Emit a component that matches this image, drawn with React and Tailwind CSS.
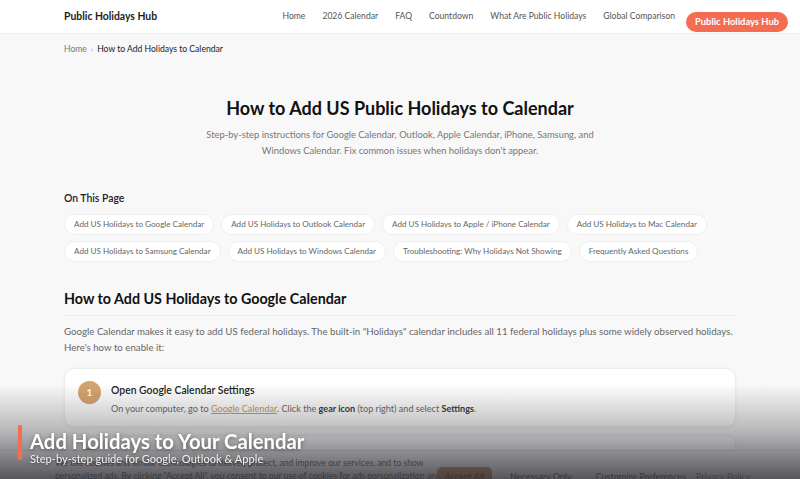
import React from 'react';

const NAV = ['Home', '2026 Calendar', 'FAQ', 'Countdown', 'What Are Public Holidays', 'Global Comparison'];

const TOC = [
  ['Add US Holidays to Google Calendar', 'Add US Holidays to Outlook Calendar', 'Add US Holidays to Apple / iPhone Calendar', 'Add US Holidays to Mac Calendar'],
  ['Add US Holidays to Samsung Calendar', 'Add US Holidays to Windows Calendar', 'Troubleshooting: Why Holidays Not Showing', 'Frequently Asked Questions'],
];

const font = { fontFamily: 'Lato, "Liberation Sans", Arial, sans-serif' };

const Header = () => (
  <header className="h-[34px] bg-white border-b border-[#ececec] flex items-center pl-16 pr-3 whitespace-nowrap">
    <span className="text-[10.4px] font-bold text-[#1c1c1c]">Public Holidays Hub</span>
    <nav className="ml-auto flex items-center gap-[17px] text-[8.6px] text-[#555]">
      {NAV.map((item) => (
        <span key={item}>{item}</span>
      ))}
      <span className="mt-[11px] ml-[-6px] h-[20px] w-[102px] justify-center flex items-center rounded-full bg-[#f46d52] text-white font-bold text-[9.4px]">
        Public Holidays Hub
      </span>
    </nav>
  </header>
);

const StepCard = ({ num, title, children }) => (
  <div className="bg-white rounded-[10px] border border-[#eeeeee] shadow-[0_1px_4px_rgba(0,0,0,0.05)] px-[13px] py-[11px] flex gap-[10px] whitespace-nowrap">
    <div className="w-[23px] h-[23px] rounded-full bg-[#d5a36f] text-white text-[10px] font-bold flex items-center justify-center shrink-0 mt-[1px]">
      {num}
    </div>
    <div>
      <div className="text-[10.4px] font-semibold text-[#222] leading-[14px] mt-[3px]">{title}</div>
      <div className="text-[9.1px] text-[#666] leading-[13px] mt-[5px]">{children}</div>
    </div>
  </div>
);

export default function App() {
  return (
    <div className="relative w-[800px] h-[479px] overflow-hidden bg-[#f8f8f8]" style={font}>
      <Header />

      <main className="w-[672px] mx-auto">
        {/* Breadcrumb */}
        <div className="pt-[9px] text-[8.6px] flex items-center gap-[4px]">
          <span className="text-[#777]">Home</span>
          <span className="text-[#999] text-[8px]">›</span>
          <span className="text-[#222]">How to Add Holidays to Calendar</span>
        </div>

        {/* Hero */}
        <div className="text-center pt-[39px]">
          <h1 className="text-[18px] font-bold text-[#111] leading-[26px]">
            How to Add US Public Holidays to Calendar
          </h1>
          <p className="mt-[6px] mx-auto w-[400px] text-[9.4px] text-[#777] leading-[16px]">
            Step-by-step instructions for Google Calendar, Outlook, Apple Calendar, iPhone, Samsung, and Windows Calendar. Fix common issues when holidays don't appear.
          </p>
        </div>

        {/* Table of contents */}
        <div className="mt-[32px]">
          <div className="text-[10.4px] font-semibold text-[#222] leading-[14px]">On This Page</div>
          <div className="mt-[9px] flex flex-col gap-[6px]">
            {TOC.map((row, i) => (
              <div key={i} className="flex gap-[7px] whitespace-nowrap">
                {row.map((item) => (
                  <span
                    key={item}
                    className="h-[21px] px-[9px] flex items-center rounded-full bg-white border border-[#eeeeee] text-[8.1px] text-[#666]"
                  >
                    {item}
                  </span>
                ))}
              </div>
            ))}
          </div>
        </div>

        {/* Google section */}
        <section className="mt-[27px]">
          <h2 className="text-[14.3px] font-bold text-[#111] leading-[20px] pb-[6px] border-b border-[#ececec]">
            How to Add US Holidays to Google Calendar
          </h2>
          <p className="mt-[7px] text-[9.7px] text-[#666] leading-[16px]">
            Google Calendar makes it easy to add US federal holidays. The built-in "Holidays" calendar includes all 11 federal holidays plus some widely observed holidays. Here's how to enable it:
          </p>
          <div className="mt-[13px] flex flex-col gap-[8px]">
            <StepCard num={1} title="Open Google Calendar Settings">
              On your computer, go to{' '}
              <span className="text-[#c9955f] underline">Google Calendar</span>. Click the{' '}
              <b className="text-[#333]">gear icon</b> (top right) and select <b className="text-[#333]">Settings</b>.
            </StepCard>
            <StepCard num={2} title="Find the Holidays Calendar">
              In the left sidebar, scroll to <b className="text-[#333]">Add calendar</b> and choose Browse calendars of interest.
            </StepCard>
          </div>
        </section>
      </main>

      {/* Cookie banner */}
      <div className="absolute left-0 right-0 top-[450px] h-[40px] bg-[#fafafa] border-t border-[#e5e5e5] flex items-start pt-[6px] whitespace-nowrap">
        <div className="ml-[55px] w-[374px] text-[8.6px] leading-[13px] text-[#555]">
          We use cookies and similar technologies to deliver, protect, and improve our services, and to show
          <br />
          personalized ads. By clicking "Accept All", you consent to our use of cookies for ads personalization and
        </div>
        <div className="ml-[8px] mt-[10px] flex items-center text-[9px] text-[#444]">
          <span className="h-[20px] w-[55px] justify-center flex items-center rounded-[5px] bg-[#c48b57] text-[#4a2a14]">Accept All</span>
          <span className="ml-[18px]">Necessary Only</span>
          <span className="ml-[24px]">Customize Preferences</span>
          <span className="ml-[10px] text-[#777]">Privacy Policy</span>
        </div>
      </div>

      {/* Title overlay */}
      <div className="absolute left-0 right-0 bottom-0 h-[95px] bg-gradient-to-b from-[rgba(60,60,66,0)] via-[rgba(60,60,66,0.35)] to-[rgba(50,50,56,0.82)]">
        <div className="absolute left-[18px] top-[41px] w-[4px] h-[35px] bg-[#f46d52] rounded-[1px]" />
        <div className="absolute left-[30px] top-[45px] text-white whitespace-nowrap">
          <div className="text-[20.3px] font-bold leading-[24px] drop-shadow-[0_1px_2px_rgba(0,0,0,0.4)]">
            Add Holidays to Your Calendar
          </div>
          <div className="text-[11.1px] leading-[15px] -mt-[2px] text-[#f2f2f2] drop-shadow-[0_1px_1px_rgba(0,0,0,0.4)]">
            Step-by-step guide for Google, Outlook &amp; Apple
          </div>
        </div>
      </div>
    </div>
  );
}
